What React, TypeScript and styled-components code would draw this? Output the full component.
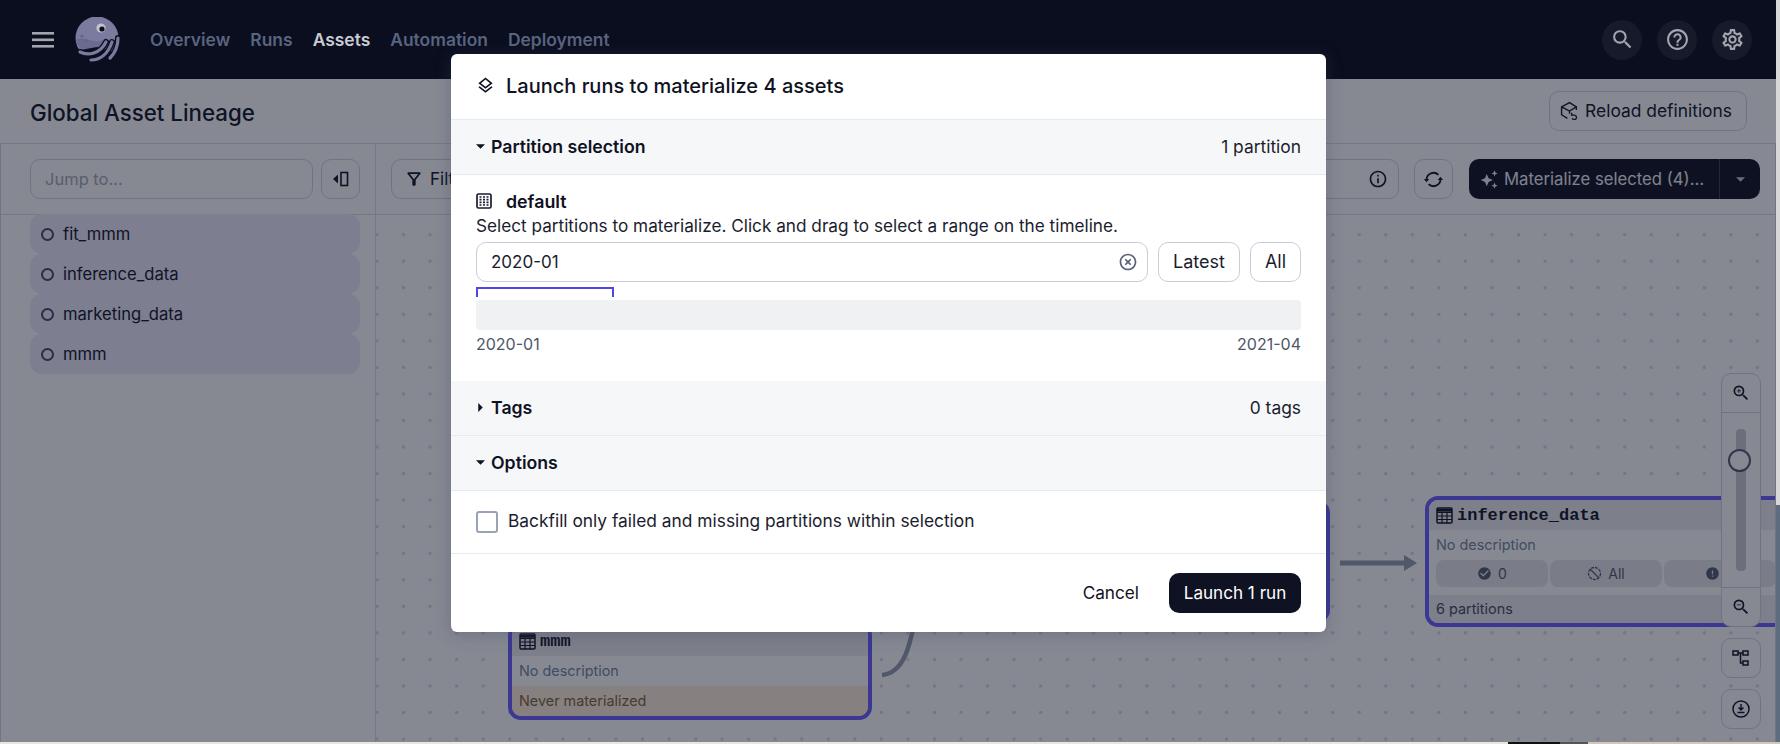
import React from "react";
import styled, { createGlobalStyle } from "styled-components";
import {
  MdCheckCircle,
  MdError,
  MdHelpOutline,
  MdHighlightOff,
  MdInfoOutline,
  MdOutlineFilterAlt,
  MdOutlineLayers,
  MdOutlineSettings,
  MdSearch,
  MdZoomIn,
  MdZoomOut,
} from "react-icons/md";

const GlobalStyle = createGlobalStyle`
  html, body {
    margin: 0;
    padding: 0;
    overflow: hidden;
  }
  * {
    box-sizing: border-box;
  }
  body {
    font-family: Inter, "Noto Sans", "Liberation Sans", sans-serif;
    color: #1b1d2e;
  }
`;

// 外层桌面背景，露出右侧和底部的窄条
const Desktop = styled.div`
  position: relative;
  width: 1780px;
  height: 744px;
  overflow: hidden;
  background:
    linear-gradient(90deg, #e8e6e0 1508px, #111 1508px, #111 1560px, #555 1560px, #555 1588px, #cfc8bc 1588px) bottom / 100% 2px no-repeat,
    linear-gradient(180deg, #d8d8d8 505px, #5d6c7e 505px);
`;

const AppWindow = styled.div`
  position: relative;
  width: 1776px;
  height: 742px;
  display: flex;
  flex-direction: column;
  overflow: hidden;
  background: #fff;
`;

// 顶部导航
const TopNav = styled.header`
  position: relative;
  z-index: 2;
  flex: 0 0 79px;
  display: flex;
  align-items: center;
  padding: 0 24px 0 32px;
  background: #0a0e1f;
`;
const Hamburger = styled.svg`
  width: 22px;
  height: 16px;
  margin-right: 21px;
`;
const Logo = styled.svg`
  width: 45px;
  height: 45px;
  margin-right: 30px;
`;
const NavLinks = styled.nav`
  display: flex;
  gap: 20px;
  flex: 1;
`;
const NavLink = styled.span<{ $active?: boolean }>`
  font-size: 17.45px;
  font-weight: 600;
  color: ${(p) => (p.$active ? "#c9cbd3" : "#59647f")};
`;
const NavIcons = styled.div`
  display: flex;
  gap: 15px;
`;
const NavIcon = styled.div`
  width: 40px;
  height: 40px;
  border-radius: 50%;
  display: flex;
  align-items: center;
  justify-content: center;
  background: #161a2b;
  color: #a3a6af;
  font-size: 25px;
`;

// 页面标题
const PageHeader = styled.div`
  flex: 0 0 65px;
  display: flex;
  align-items: center;
  justify-content: space-between;
  padding: 0 29px 1px 30px;
  border-bottom: 1px solid #e0e0e4;
`;
const PageTitle = styled.h1`
  margin: 3px 0 0;
  font-size: 22.3px;
  font-weight: 500;
`;
const OutlineButton = styled.div`
  height: 40px;
  display: flex;
  align-items: center;
  justify-content: center;
  gap: 6px;
  padding: 0 14px 0 10px;
  border: 1px solid #d4d5e0;
  border-radius: 10px;
  font-size: 17.4px;
  background: #fff;
`;

const Body = styled.div`
  flex: 1;
  min-height: 0;
  display: flex;
  border-left: 1px solid #d8d8de;
`;
const Sidebar = styled.aside`
  flex: 0 0 375px;
  display: flex;
  flex-direction: column;
  border-right: 1px solid #e0e0e4;
`;
const Toolbar = styled.div`
  flex: 0 0 71px;
  display: flex;
  align-items: center;
  border-bottom: 1px solid #e0e0e4;
`;
const SidebarToolbar = styled(Toolbar)`
  gap: 8px;
  padding: 0 15px 0 29px;
`;
const JumpInput = styled.div`
  flex: 1;
  height: 40px;
  display: flex;
  align-items: center;
  padding: 0 14px;
  border: 1px solid #d4d5e0;
  border-radius: 10px;
  font-size: 16.5px;
  color: #a8acb9;
`;
const IconButton = styled.div`
  flex: 0 0 39px;
  height: 40px;
  display: flex;
  align-items: center;
  justify-content: center;
  border: 1px solid #d4d5e0;
  border-radius: 10px;
`;
const AssetList = styled.div`
  display: flex;
  flex-direction: column;
  margin-top: -1px;
  padding: 0 15px 0 29px;
`;
const AssetItem = styled.div`
  height: 40px;
  display: flex;
  align-items: center;
  gap: 9px;
  padding-left: 11px;
  border-radius: 12px;
  background: #eeeafb;
  font-size: 16.6px;
`;
const StatusRing = styled.span`
  width: 13px;
  height: 13px;
  border: 2px solid #4c5268;
  border-radius: 50%;
`;

const Canvas = styled.main`
  flex: 1;
  min-width: 0;
  display: flex;
  flex-direction: column;
`;
const CanvasToolbar = styled(Toolbar)`
  padding: 0 15px;
  border-right: 1px solid #d8d8de;
`;
const FilterInput = styled.div`
  flex: 1;
  height: 40px;
  display: flex;
  align-items: center;
  gap: 6px;
  padding: 0 10px 0 12px;
  border: 1px solid #d4d5e0;
  border-radius: 10px;
  font-size: 17px;
  margin-right: 15px;
`;
const FilterText = styled.span`
  flex: 1;
`;
const MaterializeButton = styled.div`
  width: 291px;
  height: 40px;
  margin-left: 16px;
  display: flex;
  align-items: center;
  border-radius: 10px;
  background: #1a1a28;
  color: #f0f2f8;
  font-size: 16.7px;
`;
const MaterializeLabel = styled.div`
  flex: 1;
  display: flex;
  align-items: center;
  gap: 5px;
  padding-left: 10px;
  white-space: nowrap;
`;
const MaterializeCaret = styled.div`
  flex: 0 0 41px;
  height: 100%;
  display: flex;
  align-items: center;
  justify-content: center;
  border-left: 1px solid #44454f;
`;

// 资产画布，节点坐标即内容本身
const Graph = styled.div`
  position: relative;
  flex: 1;
  overflow: hidden;
  border-right: 1px solid #d8d8de;
  background-image: radial-gradient(circle, #dcdbe0 1.6px, transparent 2px);
  background-size: 26.55px 26.55px;
  background-position: -12.3px 6.4px;
`;
const Edges = styled.svg`
  position: absolute;
  left: 0;
  top: 0;
  width: 100%;
  height: 100%;
`;
const Node = styled.div<{ $x: number; $y: number; $w: number; $h: number }>`
  position: absolute;
  left: ${(p) => p.$x}px;
  top: ${(p) => p.$y}px;
  width: ${(p) => p.$w}px;
  height: ${(p) => p.$h}px;
  display: flex;
  flex-direction: column;
  border: 4px solid #7062ff;
  border-radius: 13px;
  background: #fff;
  overflow: hidden;
  font-size: 14.4px;
`;
const NodeTitle = styled.div`
  flex: 0 0 30px;
  display: flex;
  align-items: center;
  gap: 4px;
  padding-left: 7px;
  background: #eeecf0;
  font-family: "Liberation Mono", "DejaVu Sans Mono", monospace;
  font-weight: 700;
  font-size: 17px;
`;
const NodeDescription = styled.div`
  flex: 0 0 30px;
  display: flex;
  align-items: center;
  padding: 0 0 2px 7px;
  color: #7d8aa3;
`;
const NodeTags = styled.div`
  display: flex;
  gap: 2px;
  padding: 0 7px;
  margin-bottom: 8px;
`;
const NodeTag = styled.div`
  flex: 0 0 112px;
  height: 27px;
  display: flex;
  align-items: center;
  justify-content: center;
  gap: 6px;
  border-radius: 8px;
  background: #e8e8ea;
  color: #5a6278;
  font-size: 14px;
`;
const NodeFooter = styled.div<{ $warn?: boolean }>`
  flex: 1;
  display: flex;
  align-items: center;
  padding: 0 0 1px 7px;
  background: ${(p) => (p.$warn ? "#fff0dc" : "#eeecf0")};
  color: ${(p) => (p.$warn ? "#8a6a3e" : "#4c5268")};
`;

const ZoomColumn = styled.div`
  position: absolute;
  right: 14px;
  top: 158px;
  display: flex;
  flex-direction: column;
  gap: 11px;
`;
const ZoomGroup = styled.div`
  width: 40px;
  display: flex;
  flex-direction: column;
  border: 1px solid #d4d5e0;
  border-radius: 10px;
  background: #fff;
`;
const ZoomButton = styled.div`
  height: 38px;
  display: flex;
  align-items: center;
  justify-content: center;
  font-size: 20px;
  color: #1b1d2e;
`;
const ZoomSlider = styled.div`
  position: relative;
  height: 176px;
  padding: 16px 0;
  display: flex;
  justify-content: center;
  border-top: 1px solid #d4d5e0;
  border-bottom: 1px solid #d4d5e0;
`;
const ZoomTrack = styled.div`
  width: 10px;
  border-radius: 4px;
  background: #cbcdd4;
`;
const ZoomThumb = styled.div`
  position: absolute;
  left: 6px;
  top: 36px;
  width: 23px;
  height: 23px;
  border: 2px solid #5a6278;
  border-radius: 50%;
  background: #fff;
`;

// 遮罩层，顶部导航在它上面
const Backdrop = styled.div`
  position: absolute;
  left: 0;
  right: 0;
  top: 79px;
  bottom: 0;
  z-index: 1;
  background: rgba(3, 9, 28, 0.48);
`;

// 弹窗
const Dialog = styled.section`
  position: absolute;
  z-index: 3;
  left: 451px;
  top: 54px;
  width: 875px;
  height: 578px;
  display: flex;
  flex-direction: column;
  border-radius: 6px;
  background: #fff;
  box-shadow: 0 2px 16px rgba(60, 70, 100, 0.35);
  overflow: hidden;
`;
const DialogHeader = styled.div`
  flex: 0 0 66px;
  display: flex;
  align-items: center;
  gap: 11px;
  padding: 0 25px 2px;
  border-bottom: 1px solid #e8eaee;
  font-size: 20px;
  font-weight: 500;
  color: #0f1222;
`;
const SectionHeader = styled.div`
  flex: 0 0 55px;
  display: flex;
  align-items: center;
  justify-content: space-between;
  padding: 0 25px 2px;
  background: #f6f7f9;
  border-bottom: 1px solid #e8eaee;
`;
const SectionTitle = styled.div`
  display: flex;
  align-items: center;
  gap: 6px;
  font-size: 17.7px;
  font-weight: 600;
  color: #0f1222;
`;
const SectionValue = styled.div`
  font-size: 17.4px;
  color: #1b1d2e;
`;
const Caret = styled.svg<{ $closed?: boolean }>`
  width: 9px;
  height: 9px;
  transform: ${(p) => (p.$closed ? "rotate(-90deg)" : "none")};
`;
const PartitionBody = styled.div`
  flex: 0 0 206px;
  display: flex;
  flex-direction: column;
  padding: 16px 25px 0;
`;
const PartitionName = styled.div`
  height: 22px;
  display: flex;
  align-items: center;
  gap: 14px;
  padding-bottom: 2px;
  font-size: 17.8px;
  font-weight: 600;
  color: #0f1222;
`;
const Hint = styled.div`
  height: 22px;
  margin-top: 2px;
  line-height: 22px;
  font-size: 17.2px;
  white-space: nowrap;
`;
const RangeRow = styled.div`
  height: 40px;
  margin-top: 5px;
  display: flex;
  gap: 10px;
`;
const RangeInput = styled.div`
  flex: 1;
  display: flex;
  align-items: center;
  justify-content: space-between;
  padding: 0 9px 0 14px;
  border: 1px solid #c9cdd9;
  border-radius: 10px;
  font-size: 17px;
  color: #5a6278;
`;
const RangeValue = styled.span`
  color: #1b1d2e;
`;
const SmallButton = styled.div<{ $w: number }>`
  flex: 0 0 ${(p) => p.$w}px;
  display: flex;
  align-items: center;
  justify-content: center;
  padding-bottom: 2px;
  border: 1px solid #c9cdd9;
  border-radius: 10px;
  font-size: 18px;
`;
const SelectionMark = styled.div`
  width: 138px;
  height: 10px;
  margin-top: 5px;
  border: 2px solid #4f46e5;
  border-bottom: 0;
`;
const TimelineBar = styled.div`
  height: 30px;
  margin-top: 3px;
  border-radius: 4px;
  background: #f0f1f3;
`;
const TimelineLabels = styled.div`
  height: 22px;
  margin-top: 3px;
  display: flex;
  align-items: center;
  justify-content: space-between;
  font-size: 16px;
  color: #4f5668;
`;
const CheckRow = styled.label`
  flex: 0 0 63px;
  display: flex;
  align-items: center;
  gap: 10px;
  padding: 0 25px;
  border-bottom: 1px solid #e8eaee;
  font-size: 17.35px;
`;
const CheckBox = styled.span`
  width: 22px;
  height: 22px;
  border: 2px solid #9aa3b5;
  border-radius: 3px;
`;
const CheckLabel = styled.span`
  margin-top: -3px;
`;
const DialogFooter = styled.div`
  flex: 1;
  display: flex;
  align-items: center;
  justify-content: flex-end;
  gap: 30px;
  padding: 0 25px;
`;
const CancelLink = styled.span`
  margin-top: -2px;
  font-size: 17.2px;
  color: #0f1222;
`;
const PrimaryButton = styled.div`
  width: 132px;
  height: 40px;
  display: flex;
  align-items: center;
  justify-content: center;
  padding-bottom: 2px;
  border-radius: 10px;
  background: #0f1222;
  color: #fff;
  font-size: 17.1px;
`;

const DownCaret = ({ closed, color = "#0f1222" }: { closed?: boolean; color?: string }) => (
  <Caret viewBox="0 0 10 10" $closed={closed}>
    <path d="M0 2.5h10L5 7.5z" fill={color} />
  </Caret>
);

const TableIcon = () => (
  <svg width="17" height="17" viewBox="0 0 17 17" fill="none" stroke="#1b1d2e" strokeWidth="1.5">
    <rect x="1" y="1" width="15" height="15" rx="1" />
    <path d="M1 5.5h15M1 9h15M1 12.5h15M6 5.5V16M11 5.5V16" strokeWidth="1.2" />
    <path d="M1 3.2h15" strokeWidth="3" />
  </svg>
);

const PartitionIcon = () => (
  <svg width="16" height="16" viewBox="0 0 16 16" fill="none">
    <rect x="1" y="1" width="14" height="14" rx="1.5" stroke="#1b1d2e" strokeWidth="1.7" />
    <path d="M3.5 4h9M3.5 6.7h9M3.5 9.4h9M3.5 12h9" stroke="#1b1d2e" strokeWidth="1.7" strokeDasharray="2 1.5" />
  </svg>
);

const CollapseIcon = () => (
  <svg width="18" height="18" viewBox="0 0 18 18" fill="none">
    <path d="M6 4.5v9L1 9z" fill="#1b1d2e" />
    <rect x="9" y="2.5" width="6.5" height="13" stroke="#1b1d2e" strokeWidth="1.6" />
  </svg>
);

const RefreshIcon = () => (
  <svg width="21" height="21" viewBox="0 0 18 18" fill="none" stroke="#1b1d2e" strokeWidth="1.6">
    <path d="M3 9a6 6 0 0 1 10.2-4" />
    <path d="M15 9a6 6 0 0 1-10.2 4" />
    <path d="M0.8 8.5h4.6L3 11.4zM17.2 9.5h-4.6L15 6.6z" fill="#1b1d2e" stroke="none" />
  </svg>
);

const ReloadIcon = () => (
  <svg width="19" height="19" viewBox="0 0 18 18" fill="none" stroke="#1b1d2e" strokeWidth="1.3">
    <path d="M7 16.5 1.5 13V5.5L9 1.5l6.5 4v3" />
    <path d="M1.5 5.5 9 9.5l6.5-4M9 9.5V12" />
    <path d="M11 11.2v2.2h2.6a2.1 2.1 0 1 1-2 3" />
  </svg>
);

const SparkleIcon = () => (
  <svg width="20" height="20" viewBox="0 0 18 18" fill="#f0f2f8">
    <path d="M7 4.5 8.6 8.4 12.5 10 8.6 11.6 7 15.5 5.4 11.6 1.5 10 5.4 8.4z" />
    <path d="M14 1.2l.8 2 2 .8-2 .8-.8 2-.8-2-2-.8 2-.8zM14 12.2l.8 2 2 .8-2 .8-.8 2-.8-2-2-.8 2-.8z" />
  </svg>
);

const LayoutIcon = () => (
  <svg width="18" height="18" viewBox="0 0 18 18" fill="none" stroke="#1b1d2e" strokeWidth="1.5">
    <rect x="1" y="2" width="5" height="4" />
    <rect x="11" y="2" width="5" height="4" />
    <rect x="11" y="12" width="5" height="4" />
    <path d="M6 4h5M8.5 4v10H11" />
  </svg>
);

const DownloadIcon = () => (
  <svg width="20" height="20" viewBox="0 0 20 20" fill="none" stroke="#1b1d2e" strokeWidth="1.5">
    <circle cx="10" cy="10" r="8" />
    <path d="M10 5v5.5M7.5 8.5 10 11l2.5-2.5M6.5 13.5h7" />
  </svg>
);

const MissingIcon = () => (
  <svg width="15" height="15" viewBox="0 0 15 15" fill="none" stroke="#5a6278" strokeWidth="1.3">
    <circle cx="7.5" cy="7.5" r="6" strokeDasharray="3 1" />
    <path d="M3 3l9 9" />
  </svg>
);

const DagsterLogo = () => (
  <Logo viewBox="0 0 45 45" fill="none">
    <circle cx="22" cy="21" r="21.5" fill="#7b7b9f" />
    <path d="M1 23c1 9 9 12 17 10 6-2 10-6 11-11-5 3-9 3-14 1-5-2-10-2-14 0z" fill="#6b6b92" />
    <circle cx="7" cy="19" r="1.6" fill="#62628a" />
    <circle cx="11" cy="24" r="1.4" fill="#62628a" />
    <circle cx="26" cy="11" r="4.6" fill="#c2c3cc" />
    <circle cx="27" cy="12" r="2.6" fill="#0a0e1f" />
    <path d="M0 34c4 6 10 11 16 11h29v-8L22 30z" fill="#0a0e1f" />
    <g strokeLinecap="round" fill="none">
      <path d="M35 41c5-5 8-12 8-20" stroke="#0a0e1f" strokeWidth="6" />
      <path d="M35 41c5-5 8-12 8-20" stroke="#7b7b9f" strokeWidth="3.2" />
      <path d="M16 43c9 0 17-6 21-18" stroke="#0a0e1f" strokeWidth="6" />
      <path d="M16 43c9 0 17-6 21-18" stroke="#7b7b9f" strokeWidth="3.2" />
      <path d="M5 35c8 4 20 2 26-10" stroke="#0a0e1f" strokeWidth="6" />
      <path d="M5 35c8 4 20 2 26-10" stroke="#7b7b9f" strokeWidth="3.2" />
    </g>
  </Logo>
);

const navItems = ["Overview", "Runs", "Assets", "Automation", "Deployment"];
const assets = ["fit_mmm", "inference_data", "marketing_data", "mmm"];

const App: React.FC = () => {
  return (
    <Desktop>
      <GlobalStyle />
      <AppWindow>
        <TopNav>
          <Hamburger viewBox="0 0 22 16" fill="#a3a6af">
            <rect y="0" width="22" height="2.6" />
            <rect y="6.5" width="22" height="2.6" />
            <rect y="13" width="22" height="2.6" />
          </Hamburger>
          <DagsterLogo />
          <NavLinks>
            {navItems.map((item) => (
              <NavLink key={item} $active={item === "Assets"}>
                {item}
              </NavLink>
            ))}
          </NavLinks>
          <NavIcons>
            <NavIcon>
              <MdSearch />
            </NavIcon>
            <NavIcon>
              <MdHelpOutline />
            </NavIcon>
            <NavIcon>
              <MdOutlineSettings />
            </NavIcon>
          </NavIcons>
        </TopNav>

        <PageHeader>
          <PageTitle>Global Asset Lineage</PageTitle>
          <OutlineButton>
            <ReloadIcon />
            Reload definitions
          </OutlineButton>
        </PageHeader>

        <Body>
          <Sidebar>
            <SidebarToolbar>
              <JumpInput>Jump to...</JumpInput>
              <IconButton>
                <CollapseIcon />
              </IconButton>
            </SidebarToolbar>
            <AssetList>
              {assets.map((name) => (
                <AssetItem key={name}>
                  <StatusRing />
                  {name}
                </AssetItem>
              ))}
            </AssetList>
          </Sidebar>

          <Canvas>
            <CanvasToolbar>
              <FilterInput>
                <MdOutlineFilterAlt size={20} />
                <FilterText>Filter</FilterText>
                <MdInfoOutline size={20} />
              </FilterInput>
              <IconButton>
                <RefreshIcon />
              </IconButton>
              <MaterializeButton>
                <MaterializeLabel>
                  <SparkleIcon />
                  Materialize selected (4)…
                </MaterializeLabel>
                <MaterializeCaret>
                  <DownCaret color="#c9cbd3" />
                </MaterializeCaret>
              </MaterializeButton>
            </CanvasToolbar>

            <Graph>
              <Edges fill="none">
                <path d="M506 460C530 458 535 425 541 395" stroke="#97a1b0" strokeWidth="4.5" />
                <path d="M964 348h66" stroke="#97a1b0" strokeWidth="5" />
                <path d="M1028 340l13 8-13 8z" fill="#97a1b0" />
              </Edges>
              <Node $x={132} $y={407} $w={364} $h={98}>
                <NodeTitle>
                  <TableIcon />
                  mmm
                </NodeTitle>
                <NodeDescription>No description</NodeDescription>
                <NodeFooter $warn>Never materialized</NodeFooter>
              </Node>
              <Node $x={590} $y={285} $w={364} $h={123}>
                <NodeTitle>
                  <TableIcon />
                  marketing_data
                </NodeTitle>
                <NodeDescription>No description</NodeDescription>
                <NodeFooter>6 partitions</NodeFooter>
              </Node>
              <Node $x={1049} $y={281} $w={364} $h={131}>
                <NodeTitle>
                  <TableIcon />
                  inference_data
                </NodeTitle>
                <NodeDescription>No description</NodeDescription>
                <NodeTags>
                  <NodeTag>
                    <MdCheckCircle size={15} />0
                  </NodeTag>
                  <NodeTag>
                    <MissingIcon />
                    All
                  </NodeTag>
                  <NodeTag>
                    <MdError size={15} />0
                  </NodeTag>
                </NodeTags>
                <NodeFooter>6 partitions</NodeFooter>
              </Node>
              <ZoomColumn>
                <ZoomGroup>
                  <ZoomButton>
                    <MdZoomIn />
                  </ZoomButton>
                  <ZoomSlider>
                    <ZoomTrack />
                    <ZoomThumb />
                  </ZoomSlider>
                  <ZoomButton>
                    <MdZoomOut />
                  </ZoomButton>
                </ZoomGroup>
                <ZoomGroup>
                  <ZoomButton>
                    <LayoutIcon />
                  </ZoomButton>
                </ZoomGroup>
                <ZoomGroup>
                  <ZoomButton>
                    <DownloadIcon />
                  </ZoomButton>
                </ZoomGroup>
              </ZoomColumn>
            </Graph>
          </Canvas>
        </Body>

        <Backdrop />

        <Dialog>
          <DialogHeader>
            <MdOutlineLayers size={19} />
            Launch runs to materialize 4 assets
          </DialogHeader>

          <SectionHeader>
            <SectionTitle>
              <DownCaret />
              Partition selection
            </SectionTitle>
            <SectionValue>1 partition</SectionValue>
          </SectionHeader>

          <PartitionBody>
            <PartitionName>
              <PartitionIcon />
              default
            </PartitionName>
            <Hint>Select partitions to materialize. Click and drag to select a range on the timeline.</Hint>
            <RangeRow>
              <RangeInput>
                <RangeValue>2020-01</RangeValue>
                <MdHighlightOff size={20} />
              </RangeInput>
              <SmallButton $w={82}>Latest</SmallButton>
              <SmallButton $w={51}>All</SmallButton>
            </RangeRow>
            <SelectionMark />
            <TimelineBar />
            <TimelineLabels>
              <span>2020-01</span>
              <span>2021-04</span>
            </TimelineLabels>
          </PartitionBody>

          <SectionHeader>
            <SectionTitle>
              <DownCaret closed />
              Tags
            </SectionTitle>
            <SectionValue>0 tags</SectionValue>
          </SectionHeader>

          <SectionHeader>
            <SectionTitle>
              <DownCaret />
              Options
            </SectionTitle>
          </SectionHeader>

          <CheckRow>
            <CheckBox />
            <CheckLabel>Backfill only failed and missing partitions within selection</CheckLabel>
          </CheckRow>

          <DialogFooter>
            <CancelLink>Cancel</CancelLink>
            <PrimaryButton>Launch 1 run</PrimaryButton>
          </DialogFooter>
        </Dialog>
      </AppWindow>
    </Desktop>
  );
};

export default App;
